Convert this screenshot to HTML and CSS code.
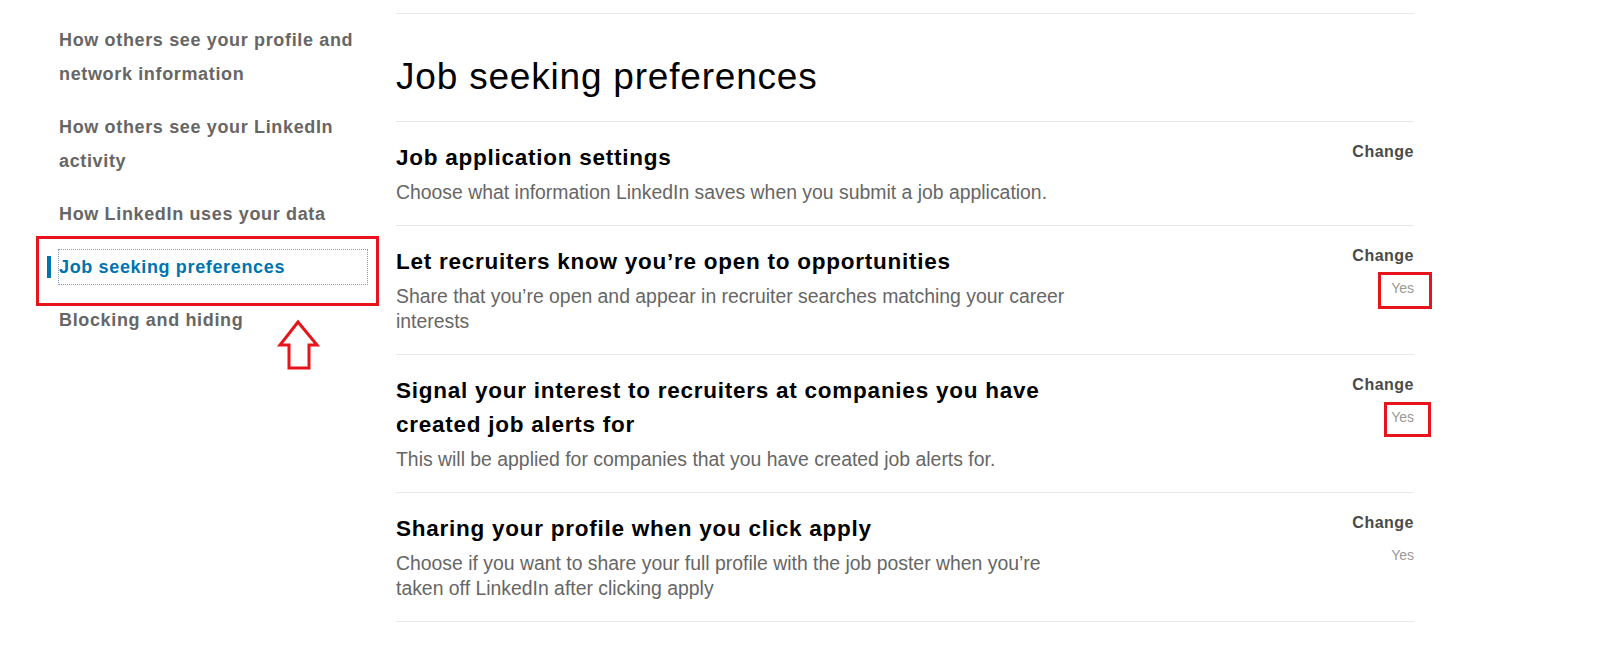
FILE: index.html
```html
<!DOCTYPE html>
<html lang="en">
<head>
<meta charset="utf-8">
<title>Job seeking preferences</title>
<link rel="stylesheet" href="styles.css">
</head>
<body>
<div class="page">
  <nav class="sidebar">
    <a class="nav-item">How others see your profile and network information</a>
    <a class="nav-item">How others see your LinkedIn activity</a>
    <a class="nav-item">How LinkedIn uses your data</a>
    <a class="nav-item active"><span class="focus">Job seeking preferences</span></a>
    <a class="nav-item">Blocking and hiding</a>
    <svg class="arrow" width="46" height="54" viewBox="0 0 46 54" aria-hidden="true">
      <path d="M22 3 L41 26 L33 26 L33 49 L13 49 L13 26 L4 26 Z" fill="none" stroke="#e8141c" stroke-width="3" stroke-linejoin="miter"/>
    </svg>
  </nav>
  <main class="content">
    <h1 class="title">Job seeking preferences</h1>
    <section class="setting">
      <div class="setting-text">
        <h2 class="setting-title">Job application settings</h2>
        <p class="setting-desc">Choose what information LinkedIn saves when you submit a job application.</p>
      </div>
      <div class="setting-action">
        <span class="change">Change</span>
      </div>
    </section>
    <section class="setting">
      <div class="setting-text">
        <h2 class="setting-title">Let recruiters know you’re open to opportunities</h2>
        <p class="setting-desc">Share that you’re open and appear in recruiter searches matching your career interests</p>
      </div>
      <div class="setting-action">
        <span class="change">Change</span>
        <span class="value marked marked-a">Yes</span>
      </div>
    </section>
    <section class="setting">
      <div class="setting-text">
        <h2 class="setting-title">Signal your interest to recruiters at companies you have created job alerts for</h2>
        <p class="setting-desc">This will be applied for companies that you have created job alerts for.</p>
      </div>
      <div class="setting-action">
        <span class="change">Change</span>
        <span class="value marked marked-b">Yes</span>
      </div>
    </section>
    <section class="setting">
      <div class="setting-text">
        <h2 class="setting-title">Sharing your profile when you click apply</h2>
        <p class="setting-desc">Choose if you want to share your full profile with the job poster when you’re taken off LinkedIn after clicking apply</p>
      </div>
      <div class="setting-action">
        <span class="change">Change</span>
        <span class="value">Yes</span>
      </div>
    </section>
  </main>
</div>
</body>
</html>
```
FILE: styles.css
```css
* { box-sizing: border-box; }
html, body { margin: 0; padding: 0; background: #fff; }
body { font-family: "Liberation Sans", Arial, sans-serif; color: #000; }

.page {
  display: flex;
  align-items: flex-start;
}

.sidebar {
  position: relative;
  width: 396px;
  flex: none;
  padding: 23px 0 0 59px;
  display: flex;
  flex-direction: column;
  gap: 19px;
}

.nav-item {
  position: relative;
  display: block;
  width: 308px;
  font-size: 18px;
  font-weight: bold;
  line-height: 34px;
  letter-spacing: 0.65px;
  color: #666;
  text-decoration: none;
}

.nav-item.active { color: #0073b1; }
.nav-item.active::before {
  content: "";
  position: absolute;
  left: -12px;
  top: 6px;
  width: 4px;
  height: 22px;
  background: #0073b1;
}
.nav-item.active .focus {
  display: block;
  outline: 1px dotted #7f9dbd;
}
.nav-item.active::after {
  content: "";
  position: absolute;
  left: -23px;
  right: -12px;
  top: -14px;
  bottom: -22px;
  border: 3px solid #e8141c;
}

.arrow {
  position: absolute;
  left: 276px;
  top: 319px;
}

.content {
  width: 1018px;
  flex: none;
  margin-top: 13px;
  border-top: 1px solid #e6e9ec;
}

.title {
  margin: 41px 0 0;
  padding-bottom: 22px;
  font-size: 37px;
  line-height: 44px;
  font-weight: normal;
  letter-spacing: 0.8px;
  color: #000;
  border-bottom: 1px solid #e6e9ec;
}

.setting {
  display: flex;
  justify-content: space-between;
  align-items: flex-start;
  padding: 19px 0 20px;
  border-bottom: 1px solid #e6e9ec;
}

.setting-text { width: 680px; }

.setting-title {
  margin: 0;
  font-size: 22.5px;
  line-height: 34px;
  font-weight: bold;
  letter-spacing: 0.75px;
  color: #000;
}

.setting-desc {
  margin: 5px 0 0;
  font-size: 19.4px;
  line-height: 25px;
  color: #666;
}

.setting-action {
  display: flex;
  flex-direction: column;
  align-items: flex-end;
}

.change {
  font-size: 16px;
  line-height: 22px;
  font-weight: bold;
  letter-spacing: 0.5px;
  color: #4a4a4a;
}

.value {
  margin-top: 11px;
  font-size: 14px;
  line-height: 20px;
  color: #999;
}

.marked { position: relative; }
.marked::after {
  content: "";
  position: absolute;
  border: 3px solid #e8141c;
}
.marked-a::after { left: -13px; right: -18px; top: -6px; bottom: -11px; }
.marked-b::after { left: -7px; right: -17px; top: -5px; bottom: -10px; }
```
